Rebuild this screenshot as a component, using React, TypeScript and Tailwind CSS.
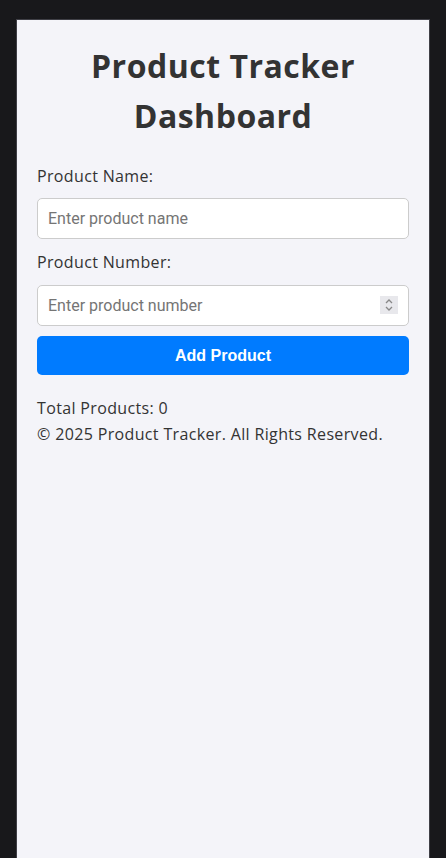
export default function App() {
  return (
    <div className="min-h-[858px] bg-[#18181b] pt-[19px] pl-[16px] pr-[16px]">
      <div className="min-h-[839px] w-[414px] border-l border-r border-t border-[#3f3f46] bg-[#f4f4f9] px-[20px] text-[#333] font-['Open_Sans',sans-serif]">
        <h1 className="pt-[21px] pb-[21px] text-center text-[32px] leading-[50px] font-bold tracking-[0.5px] text-[#333]">
          Product Tracker Dashboard
        </h1>
        <div className="flex flex-col tracking-[0.35px]">
          <label className="text-[16px] leading-[24px] pt-[2px]">Product Name:</label>
          <input
            type="text"
            placeholder="Enter product name"
            className="mt-[10px] h-[41px] w-full rounded-[5px] border border-[#ccc] bg-white px-[10px] text-[16px] tracking-normal font-['Roboto',sans-serif] placeholder:text-[#757575] outline-none"
          />
          <label className="mt-[11px] text-[16px] leading-[24px]">Product Number:</label>
          <div className="relative mt-[11px]">
            <input
              type="text"
              placeholder="Enter product number"
              className="h-[41px] w-full rounded-[5px] border border-[#ccc] bg-white px-[10px] text-[16px] tracking-normal font-['Roboto',sans-serif] placeholder:text-[#757575] outline-none"
            />
            <div className="absolute right-[11px] top-[11px] flex h-[18px] w-[18px] items-center justify-center bg-[#e8e8ec]">
              <svg width="10" height="14" viewBox="0 0 10 14" fill="none" stroke="#888" strokeWidth="1.3">
                <path d="M2 5 L5 2 L8 5" />
                <path d="M2 9 L5 12 L8 9" />
              </svg>
            </div>
          </div>
          <button className="mt-[10px] h-[39px] w-full rounded-[5px] bg-[#007bff] text-[16px] font-bold tracking-normal text-white font-['Liberation_Sans',sans-serif]">
            Add Product
          </button>
          <p className="mt-[20px] text-[16px] leading-[26px]">Total Products: 0</p>
          <p className="text-[16px] leading-[26px]">© 2025 Product Tracker. All Rights Reserved.</p>
        </div>
      </div>
    </div>
  );
}
